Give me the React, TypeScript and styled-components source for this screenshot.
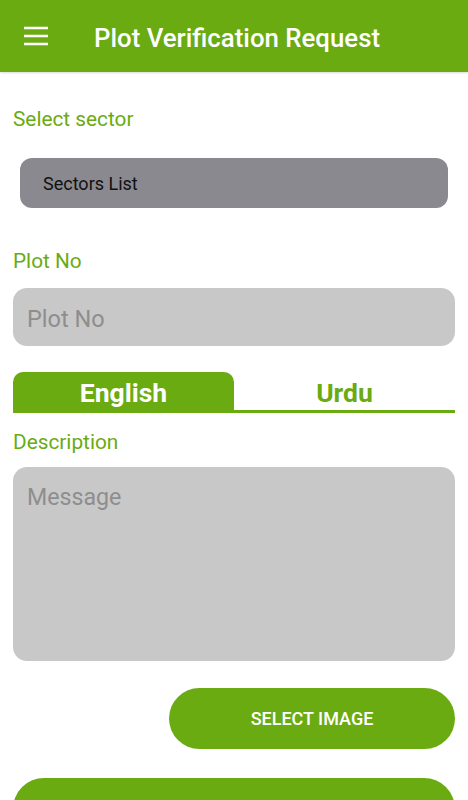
import React, { useState } from 'react';
import styled, { createGlobalStyle } from 'styled-components';

const GREEN = '#6aab12';

const GlobalStyle = createGlobalStyle`
  html, body {
    margin: 0;
    padding: 0;
    background: #ffffff;
    font-family: Roboto, "Noto Sans", sans-serif;
  }
  * { box-sizing: border-box; }
`;

const Screen = styled.div`
  width: 468px;
  height: 800px;
  overflow: hidden;
  background: #ffffff;
`;

const AppBar = styled.header`
  height: 72px;
  background: ${GREEN};
  display: flex;
  align-items: center;
  padding-left: 24px;
  padding-top: 3px;
  box-shadow: 0 1px 2px rgba(0, 0, 0, 0.15);
`;

const MenuButton = styled.button`
  width: 24px;
  height: 24px;
  padding: 0;
  border: none;
  background: transparent;
  display: flex;
  align-items: center;
  justify-content: center;
  margin-right: 46px;
  margin-top: -3px;
`;

const Title = styled.h1`
  margin: 0;
  color: #ffffff;
  font-size: 25.8px;
  font-weight: 500;
`;

const Form = styled.div`
  padding: 0 13px;
  display: flex;
  flex-direction: column;
`;

const Label = styled.div<{ $top: number }>`
  margin-top: ${p => p.$top}px;
  color: ${GREEN};
  font-size: 20.8px;
  line-height: 24px;
`;

const Spinner = styled.div`
  margin: 27px 7px 0 7px;
  height: 50px;
  border-radius: 12px;
  background: #8a898f;
  display: flex;
  align-items: center;
  padding-left: 23px;
  font-size: 18px;
  color: #111111;
`;

const Field = styled.input`
  margin-top: 15px;
  height: 58px;
  border: none;
  outline: none;
  border-radius: 14px;
  background: #c8c8c8;
  padding: 4px 14px 0;
  font-family: Roboto, sans-serif;
  font-size: 23.5px;
  color: #333;
  &::placeholder { color: #8e8e8e; }
`;

const Tabs = styled.div`
  margin-top: 26px;
  height: 41px;
  display: grid;
  grid-template-columns: 221px 1fr;
  border-bottom: 3px solid ${GREEN};
`;

const Tab = styled.button<{ $active: boolean }>`
  border: none;
  padding: 0;
  border-radius: 10px 10px 0 0;
  background: ${p => (p.$active ? GREEN : 'transparent')};
  color: ${p => (p.$active ? '#ffffff' : GREEN)};
  font-family: Roboto, sans-serif;
  font-size: 26.5px;
  font-weight: 700;
  display: flex;
  align-items: center;
  justify-content: center;
  padding-top: 3px;
`;

const MessageArea = styled.textarea`
  margin-top: 13px;
  height: 194px;
  border: none;
  outline: none;
  resize: none;
  border-radius: 14px;
  background: #c8c8c8;
  padding: 16px 14px;
  font-family: Roboto, sans-serif;
  font-size: 23.2px;
  color: #333;
  &::placeholder { color: #8e8e8e; }
`;

const ButtonRow = styled.div`
  margin-top: 27px;
  display: flex;
  justify-content: flex-end;
`;

const PillButton = styled.button<{ $wide?: boolean }>`
  width: ${p => (p.$wide ? '100%' : '286px')};
  height: ${p => (p.$wide ? '80px' : '61px')};
  border: none;
  border-radius: 31px;
  background: ${GREEN};
  color: #ffffff;
  font-family: Roboto, sans-serif;
  font-size: 18px;
  font-weight: 500;
`;

const SubmitRow = styled.div`
  margin-top: 29px;
  display: flex;
`;

export default function App() {
  const [lang, setLang] = useState<'en' | 'ur'>('en');

  return (
    <>
      <GlobalStyle />
      <Screen>
        <AppBar>
          <MenuButton aria-label="menu">
            <svg width="24" height="24" viewBox="0 0 24 24">
              <path d="M0 4h24M0 12h24M0 20h24" stroke="#ffffff" strokeWidth="2.4" />
            </svg>
          </MenuButton>
          <Title>Plot Verification Request</Title>
        </AppBar>
        <Form>
          <Label $top={35}>Select sector</Label>
          <Spinner>Sectors List</Spinner>
          <Label $top={41}>Plot No</Label>
          <Field placeholder="Plot No" />
          <Tabs>
            <Tab $active={lang === 'en'} onClick={() => setLang('en')}>English</Tab>
            <Tab $active={lang === 'ur'} onClick={() => setLang('ur')}>Urdu</Tab>
          </Tabs>
          <Label $top={17}>Description</Label>
          <MessageArea placeholder="Message" />
          <ButtonRow>
            <PillButton>SELECT IMAGE</PillButton>
          </ButtonRow>
          <SubmitRow>
            <PillButton $wide>SUBMIT</PillButton>
          </SubmitRow>
        </Form>
      </Screen>
    </>
  );
}
